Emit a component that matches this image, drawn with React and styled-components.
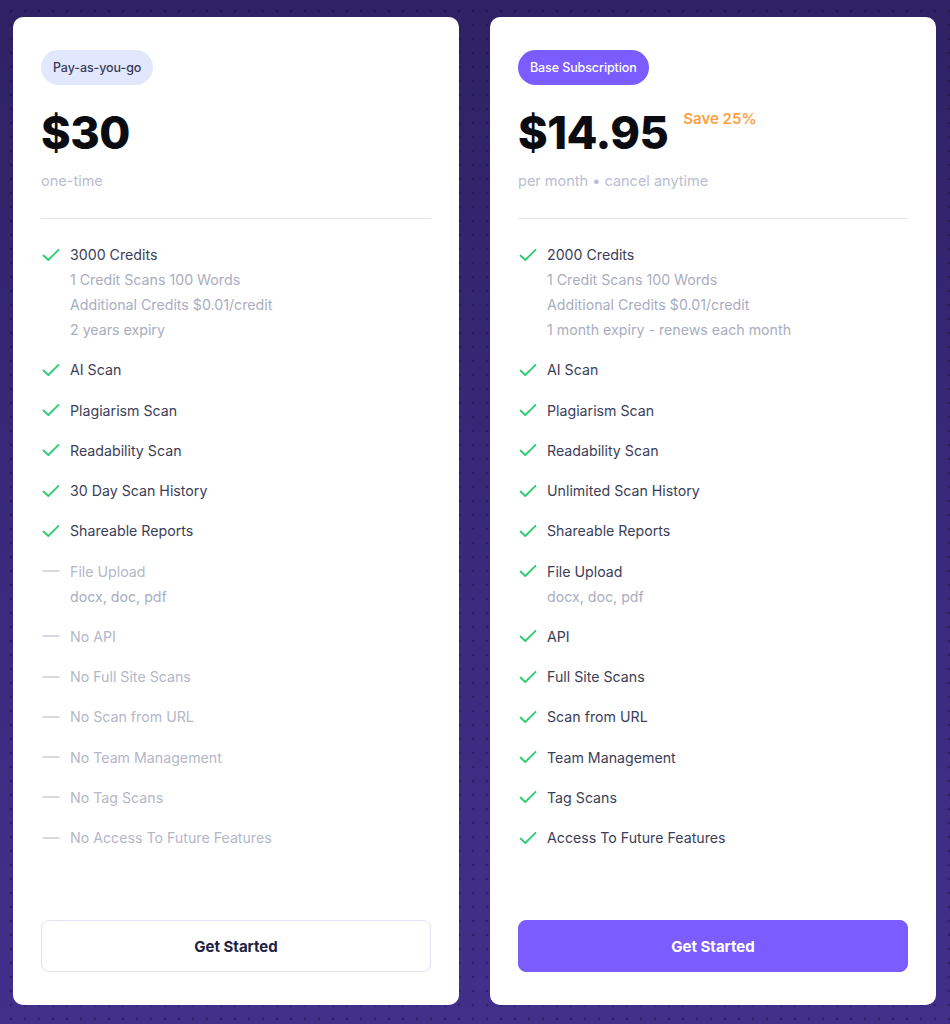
import React from "react";
import styled, { createGlobalStyle } from "styled-components";

const Global = createGlobalStyle`
  html, body {
    margin: 0;
    padding: 0;
  }
  body {
    font-family: Inter, "Noto Sans", sans-serif;
    background-color: #33266f;
    background-image:
      radial-gradient(circle, rgba(20, 10, 50, 0.4) 1.1px, transparent 1.7px),
      linear-gradient(180deg, #2e2264 0%, #3a2b7e 60%, #41308a 100%);
    background-size: 14px 14px, 100% 100%;
    background-position: 4px 4px, 0 0;
    min-height: 1024px;
  }
`;

const Page = styled.div`
  display: flex;
  gap: 31px;
  padding: 17px 14px 0 13px;
`;

const Card = styled.div`
  box-sizing: border-box;
  width: 447px;
  height: 988px;
  background: #fff;
  border-radius: 10px;
  padding: 33px 28px 33px 28px;
  display: flex;
  flex-direction: column;
`;

const Badge = styled.div`
  align-self: flex-start;
  height: 35px;
  box-sizing: border-box;
  padding: 0 12px;
  border-radius: 18px;
  display: flex;
  align-items: center;
  font-size: 12.5px;
  font-weight: 500;
  letter-spacing: -0.1px;
  background: ${(p) => (p.$accent ? "#7b5cff" : "#e1e8fd")};
  color: ${(p) => (p.$accent ? "#fff" : "#3a3a58")};
`;

const PriceRow = styled.div`
  display: flex;
  align-items: flex-start;
  gap: 15px;
  margin-top: 20px;
`;

const Price = styled.div`
  font-size: 45px;
  font-weight: 800;
  color: #0b0b12;
  line-height: 56px;
  letter-spacing: -0.5px;
`;

const Save = styled.div`
  font-size: 15px;
  font-weight: 600;
  color: #ff9f40;
  margin-top: 4px;
`;

const Period = styled.div`
  font-size: 14.5px;
  color: #b9bdd0;
  margin-top: 11px;
`;

const Divider = styled.div`
  height: 1px;
  background: #e3e5ee;
  margin-top: 29px;
  margin-bottom: 23px;
`;

const List = styled.ul`
  list-style: none;
  margin: 0;
  padding: 0;
  display: flex;
  flex-direction: column;
  gap: 15.25px;
`;

const Item = styled.li`
  display: flex;
  gap: 10px;
  font-size: 14.2px;
  line-height: 25px;
`;

const IconBox = styled.span`
  width: 19px;
  height: 25px;
  display: flex;
  align-items: center;
  justify-content: center;
  flex-shrink: 0;
`;

const Texts = styled.div`
  display: flex;
  flex-direction: column;
`;

const Main = styled.span`
  color: ${(p) => (p.$off ? "#b3b7c9" : "#3b3e58")};
`;

const Sub = styled.span`
  color: #a9adc0;
`;

const Action = styled.button`
  margin-top: auto;
  height: 52px;
  border-radius: 8px;
  font-family: inherit;
  font-size: 15px;
  font-weight: 700;
  cursor: pointer;
  border: 1px solid ${(p) => (p.$accent ? "#7b5cff" : "#dfe2f3")};
  background: ${(p) => (p.$accent ? "#7b5cff" : "#fff")};
  color: ${(p) => (p.$accent ? "#fff" : "#221f45")};
`;

const Check = () => (
  <svg width="18" height="14" viewBox="0 0 18 14" fill="none">
    <path d="M1.5 7.5 L6.3 12 L16.5 1.8" stroke="#2ecc71" strokeWidth="1.8" strokeLinecap="round" strokeLinejoin="round" />
  </svg>
);

const Dash = () => (
  <svg width="18" height="4" viewBox="0 0 18 4" fill="none">
    <path d="M1 2 H17" stroke="#c9ccda" strokeWidth="1.4" strokeLinecap="round" />
  </svg>
);

const plans = [
  {
    badge: "Pay-as-you-go",
    price: "$30",
    period: "one-time",
    features: [
      { t: "3000 Credits", sub: ["1 Credit Scans 100 Words", "Additional Credits $0.01/credit", "2 years expiry"] },
      { t: "AI Scan" },
      { t: "Plagiarism Scan" },
      { t: "Readability Scan" },
      { t: "30 Day Scan History" },
      { t: "Shareable Reports" },
      { t: "File Upload", sub: ["docx, doc, pdf"], off: true },
      { t: "No API", off: true },
      { t: "No Full Site Scans", off: true },
      { t: "No Scan from URL", off: true },
      { t: "No Team Management", off: true },
      { t: "No Tag Scans", off: true },
      { t: "No Access To Future Features", off: true },
    ],
  },
  {
    badge: "Base Subscription",
    accent: true,
    price: "$14.95",
    save: "Save 25%",
    period: "per month • cancel anytime",
    features: [
      { t: "2000 Credits", sub: ["1 Credit Scans 100 Words", "Additional Credits $0.01/credit", "1 month expiry - renews each month"] },
      { t: "AI Scan" },
      { t: "Plagiarism Scan" },
      { t: "Readability Scan" },
      { t: "Unlimited Scan History" },
      { t: "Shareable Reports" },
      { t: "File Upload", sub: ["docx, doc, pdf"] },
      { t: "API" },
      { t: "Full Site Scans" },
      { t: "Scan from URL" },
      { t: "Team Management" },
      { t: "Tag Scans" },
      { t: "Access To Future Features" },
    ],
  },
];

export default function App() {
  return (
    <>
      <Global />
      <Page>
        {plans.map((p) => (
          <Card key={p.badge}>
            <Badge $accent={p.accent}>{p.badge}</Badge>
            <PriceRow>
              <Price>{p.price}</Price>
              {p.save && <Save>{p.save}</Save>}
            </PriceRow>
            <Period>{p.period}</Period>
            <Divider />
            <List>
              {p.features.map((f) => (
                <Item key={f.t}>
                  <IconBox>{f.off ? <Dash /> : <Check />}</IconBox>
                  <Texts>
                    <Main $off={f.off}>{f.t}</Main>
                    {f.sub && f.sub.map((s) => <Sub key={s}>{s}</Sub>)}
                  </Texts>
                </Item>
              ))}
            </List>
            <Action $accent={p.accent}>Get Started</Action>
          </Card>
        ))}
      </Page>
    </>
  );
}
